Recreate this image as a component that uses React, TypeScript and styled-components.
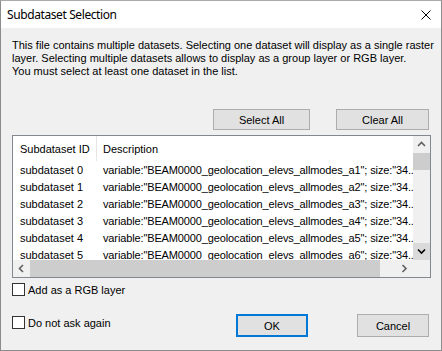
import React from "react";
import styled, { createGlobalStyle } from "styled-components";

const Global = createGlobalStyle`
  html, body { margin: 0; padding: 0; background: #ffffff; }
  body { font-family: "Liberation Sans", Arial, sans-serif; font-size: 11px; color: #000; }
  * { box-sizing: border-box; }
`;

const Window = styled.div`
  width: 442px;
  height: 351px;
  border: 1px solid #8c8c8c;
  border-top-color: #aaaaaa;
  background: #f0f0f0;
  display: flex;
  flex-direction: column;
  overflow: hidden;
`;

const TitleBar = styled.div`
  height: 27px;
  flex: none;
  background: #ffffff;
  display: flex;
  align-items: center;
  justify-content: space-between;
  padding: 0 10px 0 6px;
`;

const Title = styled.div`
  font-family: "Noto Sans", "Open Sans", sans-serif;
  font-size: 12px;
  color: #000;
  letter-spacing: -0.4px;
`;

const CloseButton = styled.div`
  width: 10px;
  height: 10px;
  display: flex;
  margin-top: 1px;
`;

const Body = styled.div`
  flex: 1;
  display: flex;
  flex-direction: column;
  padding: 0 10px 0 11px;
`;

const Message = styled.div`
  margin-top: 11px;
  line-height: 13px;
  white-space: nowrap;
`;

const ButtonRow = styled.div`
  display: flex;
  justify-content: flex-end;
  gap: 26px;
  margin: 31px 2px 0 0;
`;

const Button = styled.div<{ $w: number; $h: number; $default?: boolean }>`
  width: ${(p) => p.$w}px;
  height: ${(p) => p.$h}px;
  background: #e1e1e1;
  border: ${(p) => (p.$default ? "2px solid #0078d7" : "1px solid #adadad")};
  display: flex;
  align-items: center;
  justify-content: center;
  flex: none;
`;

const ListView = styled.div`
  margin-top: 5px;
  width: 419px;
  height: 143px;
  border: 1px solid #828790;
  background: #ffffff;
  display: grid;
  grid-template-columns: 400px 17px;
  grid-template-rows: 124px 17px;
`;

const Viewport = styled.div`
  overflow: hidden;
  white-space: nowrap;
`;

const HeaderRow = styled.div`
  height: 25px;
  display: flex;
  align-items: stretch;
`;

const Row = styled.div`
  height: 17px;
  display: flex;
  align-items: center;
`;

const IdCell = styled.div<{ $header?: boolean }>`
  width: 84px;
  flex: none;
  padding-left: 7px;
  display: flex;
  align-items: center;
  border-right: ${(p) => (p.$header ? "1px solid #e5e5e5" : "1px solid transparent")};
`;

const DescCell = styled.div<{ $header?: boolean }>`
  width: 316px;
  flex: none;
  padding-left: 6px;
  display: flex;
  align-items: center;
  overflow: hidden;
  letter-spacing: ${(p) => (p.$header ? "0" : "-0.13px")};
`;

const VScroll = styled.div`
  background: #f0f0f0;
  display: flex;
  flex-direction: column;
`;

const HScroll = styled.div`
  background: #f0f0f0;
  display: flex;
`;

const Corner = styled.div`
  background: #f0f0f0;
`;

const ArrowBox = styled.div<{ $hover?: boolean }>`
  width: 17px;
  height: 17px;
  flex: none;
  display: flex;
  align-items: center;
  justify-content: center;
  background: ${(p) => (p.$hover ? "#dadada" : "transparent")};
`;

const VThumb = styled.div`
  height: 17px;
  background: #cdcdcd;
  flex: none;
`;

const HThumb = styled.div`
  width: 350px;
  height: 17px;
  background: #cdcdcd;
  flex: none;
`;

const Fill = styled.div`
  flex: 1;
`;

const CheckRow = styled.div<{ $top: number }>`
  display: flex;
  align-items: center;
  gap: 3px;
  margin-top: ${(p) => p.$top}px;
  height: 13px;
`;

const Box = styled.div`
  width: 13px;
  height: 13px;
  border: 1px solid #333333;
  background: #ffffff;
  flex: none;
`;

const Footer = styled.div`
  display: flex;
  align-items: flex-start;
  margin: 18px 2px 0 0;
`;

const FooterButtons = styled.div`
  margin-left: auto;
  display: flex;
  gap: 49px;
`;

const Chevron = ({ dir, color }: { dir: "up" | "down" | "left" | "right"; color: string }) => {
  const pts: Record<string, string> = {
    up: "1,5 4.5,1.5 8,5",
    down: "1,1.5 4.5,5 8,1.5",
    left: "5,1 1.5,4.5 5,8",
    right: "1.5,1 5,4.5 1.5,8",
  };
  const vertical = dir === "up" || dir === "down";
  return (
    <svg width={vertical ? 9 : 7} height={vertical ? 7 : 9} viewBox={vertical ? "0 0 9 7" : "0 0 7 9"}>
      <polyline points={pts[dir]} fill="none" stroke={color} strokeWidth={1.6} />
    </svg>
  );
};

const rows = [0, 1, 2, 3, 4, 5];

export default function App() {
  return (
    <>
      <Global />
      <Window>
        <TitleBar>
          <Title>Subdataset Selection</Title>
          <CloseButton>
            <svg width="10" height="10" viewBox="0 0 10 10">
              <path d="M0.5 0.5 L9.5 9.5 M9.5 0.5 L0.5 9.5" stroke="#000" strokeWidth="1" />
            </svg>
          </CloseButton>
        </TitleBar>
        <Body>
          <Message>
            This file contains multiple datasets. Selecting one dataset will display as a single raster
            <br />
            layer. Selecting multiple datasets allows to display as a group layer or RGB layer.
            <br />
            You must select at least one dataset in the list.
          </Message>
          <ButtonRow>
            <Button $w={97} $h={21}>Select All</Button>
            <Button $w={93} $h={21}>Clear All</Button>
          </ButtonRow>
          <ListView>
            <Viewport>
              <HeaderRow>
                <IdCell $header>Subdataset ID</IdCell>
                <DescCell $header>Description</DescCell>
              </HeaderRow>
              {rows.map((i) => (
                <Row key={i}>
                  <IdCell>subdataset {i}</IdCell>
                  <DescCell>
                    variable:"BEAM0000_geolocation_elevs_allmodes_a{i + 1}"; size:"34..
                  </DescCell>
                </Row>
              ))}
            </Viewport>
            <VScroll>
              <ArrowBox>
                <Chevron dir="up" color="#606060" />
              </ArrowBox>
              <VThumb />
              <Fill />
              <ArrowBox $hover>
                <Chevron dir="down" color="#000000" />
              </ArrowBox>
            </VScroll>
            <HScroll>
              <ArrowBox>
                <Chevron dir="left" color="#606060" />
              </ArrowBox>
              <HThumb />
              <Fill />
              <ArrowBox>
                <Chevron dir="right" color="#606060" />
              </ArrowBox>
            </HScroll>
            <Corner />
          </ListView>
          <CheckRow $top={5}>
            <Box />
            <span>Add as a RGB layer</span>
          </CheckRow>
          <Footer>
            <CheckRow $top={2}>
              <Box />
              <span>Do not ask again</span>
            </CheckRow>
            <FooterButtons>
              <Button $w={72} $h={23} $default>OK</Button>
              <Button $w={72} $h={23}>Cancel</Button>
            </FooterButtons>
          </Footer>
        </Body>
      </Window>
    </>
  );
}
